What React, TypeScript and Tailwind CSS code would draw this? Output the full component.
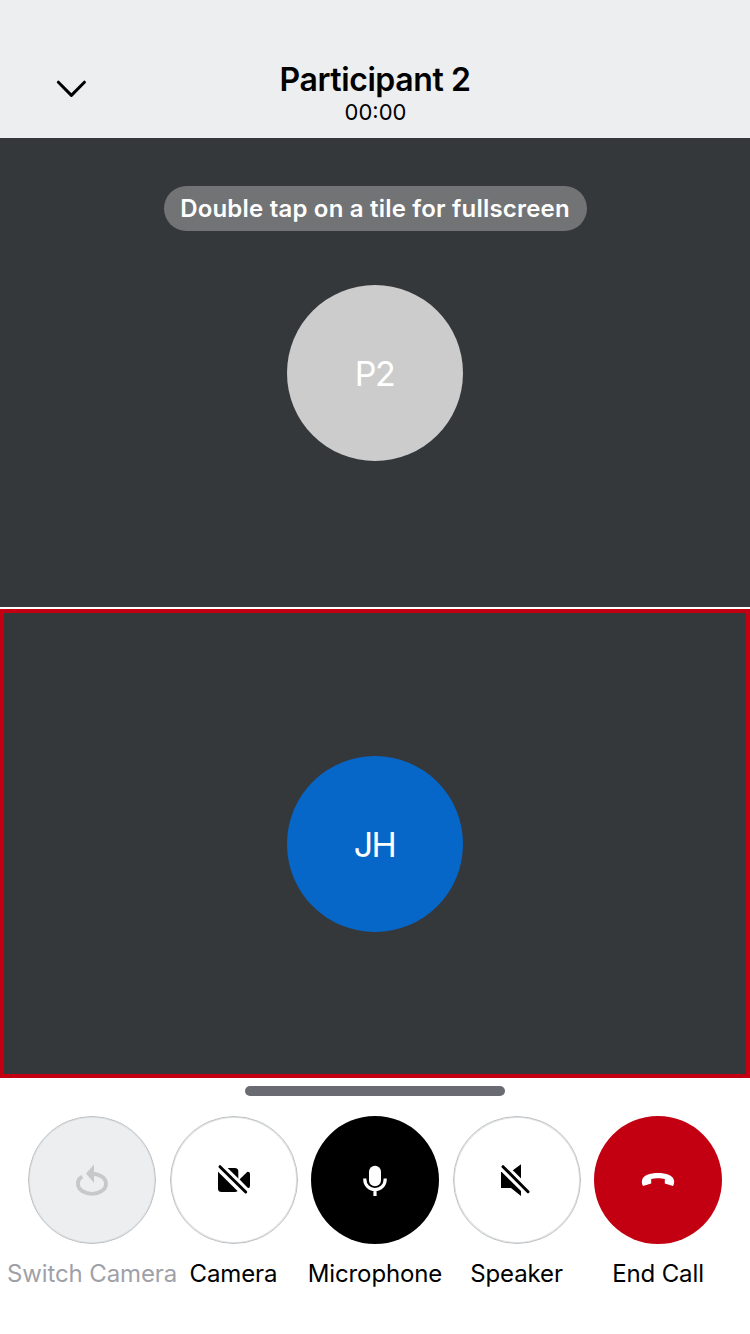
import type { ReactNode } from "react";

function CallButton({ label, circle, text = "text-black", children }: { label: string; circle: string; text?: string; children: ReactNode }) {
  return (
    <button className="flex w-[141.5px] flex-col items-center">
      <span className={`flex size-32 items-center justify-center rounded-full ${circle}`}>
        <svg viewBox="0 0 40 40" className="size-10 shrink-0" fill="none">
          {children}
        </svg>
      </span>
      <span className={`mt-[14px] whitespace-nowrap text-[24px] leading-8 tracking-[-0.12px] ${text}`}>{label}</span>
    </button>
  );
}

function Avatar({ initials, color }: { initials: string; color: string }) {
  return (
    <div className={`flex size-44 items-center justify-center rounded-full pr-px pt-[2px] text-[34px] leading-none tracking-[-1.6px] text-white ${color}`}>
      {initials}
    </div>
  );
}

export default function App() {
  return (
    <div className="flex h-[1334px] w-[750px] flex-col overflow-hidden bg-white font-['Inter','Liberation_Sans',sans-serif] text-black">
      <header className="grid h-[138px] shrink-0 grid-cols-[140px_1fr_140px] bg-[#edeef0]">
        <button aria-label="Minimize" className="flex justify-center pt-[76px]">
          <svg viewBox="0 0 32 24" className="h-6 w-8" fill="none" stroke="#000" strokeWidth="3" strokeLinecap="round" strokeLinejoin="round">
            <path d="M4.4 6.2L17.4 19.4L30.4 6.2" />
          </svg>
        </button>
        <div className="flex flex-col items-center pt-[60px]">
          <h1 className="text-[32px] font-semibold leading-10 tracking-[-0.4px]">Participant 2</h1>
          <p className="-mt-[2px] pl-px text-[22px] leading-7">00:00</p>
        </div>
      </header>
      <main className="flex shrink-0 flex-col gap-[2px]">
        <section className="flex h-[469px] flex-col items-center bg-[#35383b] pt-12">
          <p className="mb-[54px] flex h-[45px] w-[423px] items-center justify-center whitespace-nowrap rounded-[22.5px] bg-[#727375] text-[24px] font-semibold tracking-[0.2px] text-white">
            Double tap on a tile for fullscreen
          </p>
          <Avatar initials="P2" color="bg-[#cccccc]" />
        </section>
        <section className="flex h-[469px] items-center justify-center border-4 border-[#c30012] bg-[#35383b]">
          <Avatar initials="JH" color="bg-[#0667c8]" />
        </section>
      </main>
      <footer className="flex flex-col items-center pt-2">
        <div className="h-[10px] w-[260px] rounded-full bg-[#696a72]" />
        <div className="mt-5 flex justify-center">
          <CallButton label="Switch Camera" circle="bg-[#edeef0] border border-[#bfc1c3] shadow-[inset_0_0_0_1px_#dfe3e6]" text="text-[#9fa1a7]">
            <path d="M10.3 16.8C4.5 19.2 4.4 27.7 10.5 31.2C16 34.8 24 34.8 29.5 31.2C35.5 27.3 35.5 20 29.5 16.3C27.3 14.9 24.5 14 21 13.7" stroke="#c6c8ca" strokeWidth="3.9" />
            <path d="M14 13.5L22 4.5V23Z" fill="#c6c8ca" />
          </CallButton>
          <CallButton label="Camera" circle="bg-white border border-[#bfc1c3] shadow-[inset_0_0_0_1px_#dfe3e6]">
            <rect x="4" y="8" width="20.3" height="24" rx="3.5" fill="#000" />
            <path d="M25.5 19.5L33.4 11.7Q36 11.7 36 14V26Q36 28.3 33.4 28.3Z" fill="#000" />
            <path d="M2 3.1L36 36.7" stroke="#fff" strokeWidth="9.4" />
            <path d="M6 6.7L31.7 32" stroke="#000" strokeWidth="3" strokeLinecap="round" />
          </CallButton>
          <CallButton label="Microphone" circle="bg-black">
            <rect x="14" y="5.8" width="12" height="20.4" rx="6" fill="#fff" />
            <path d="M9.8 18.5V19.3C9.8 25.2 14.2 29.6 20 29.6S30.2 25.2 30.2 19.3V18.5M20 29V36" stroke="#fff" strokeWidth="3.2" />
          </CallButton>
          <CallButton label="Speaker" circle="bg-white border border-[#bfc1c3] shadow-[inset_0_0_0_1px_#dfe3e6]">
            <path d="M4 12H13.5L24 4.3V36L14 28H4Z" fill="#000" />
            <path d="M2 3L36 36.6" stroke="#fff" strokeWidth="9" />
            <path d="M6 6.7L31 31.7" stroke="#000" strokeWidth="3" strokeLinecap="round" />
          </CallButton>
          <CallButton label="End Call" circle="bg-[#c30012]">
            <path d="M4 20.5C5 15.2 12 13.1 20 13.1S35 15.2 36 20.5C36.4 22.7 36 24.5 35 26L26.8 23.4V19C23 18 17 18 13.2 19V23.4L5 26C4 24.5 3.6 22.7 4 20.5Z" fill="#fff" />
          </CallButton>
        </div>
      </footer>
    </div>
  );
}
